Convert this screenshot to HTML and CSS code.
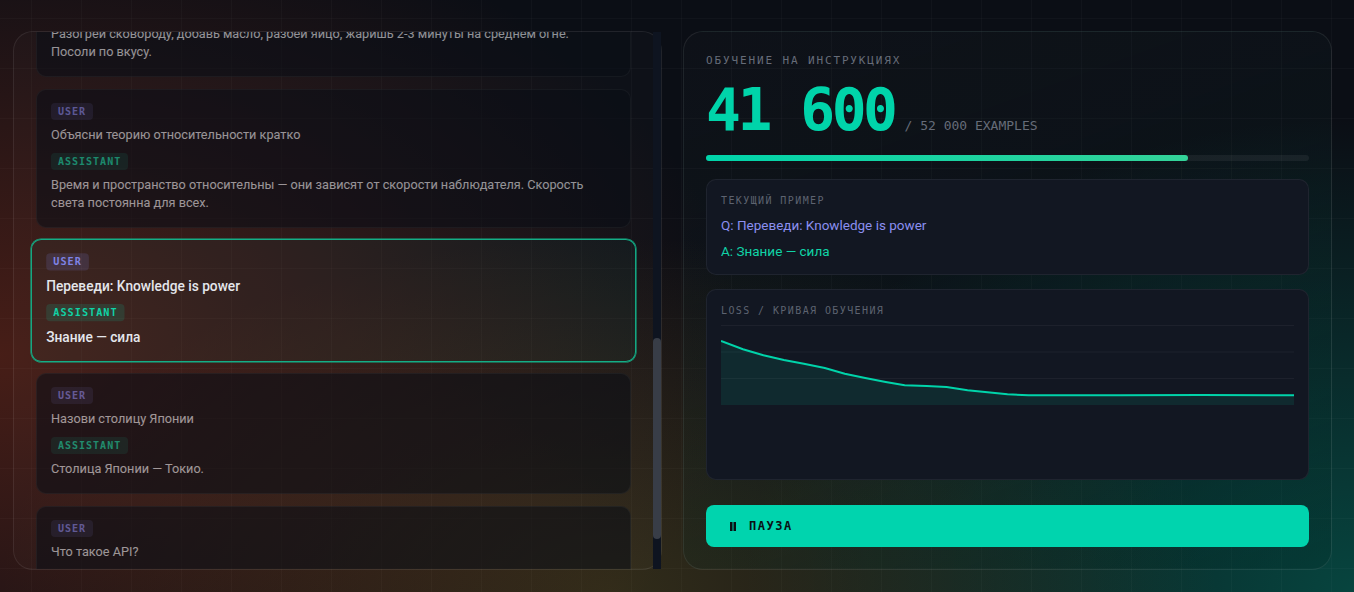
FILE: index.html
```html
<!DOCTYPE html>
<html lang="ru">
<head>
  <meta charset="UTF-8" />
  <meta name="viewport" content="width=device-width, initial-scale=1.0" />
  <title>Instruction Tuning</title>
  <link rel="stylesheet" href="styles.css">
</head>
<body>
  <div class="app">
    <!-- dataset examples -->
    <div class="panel list-panel">
      <div class="dialogs" id="dialogs">
        <div class="card">
          <span class="role user">USER</span>
          <p class="msg">Привет! Как дела?</p>
          <span class="role assistant">ASSISTANT</span>
          <p class="msg">Привет! У меня всё хорошо, спасибо. Чем могу помочь?</p>
        </div>
        <div class="card">
          <span class="role user">USER</span>
          <p class="msg">Сколько будет 15 × 4?</p>
          <span class="role assistant">ASSISTANT</span>
          <p class="msg">15 × 4 = 60.</p>
        </div>
        <div class="card">
          <span class="role user">USER</span>
          <p class="msg">Что такое фотосинтез?</p>
          <span class="role assistant">ASSISTANT</span>
          <p class="msg">Фотосинтез — процесс, при котором растения превращают свет, воду и углекислый газ в глюкозу и кислород для своего роста.</p>
        </div>
        <div class="card">
          <span class="role user">USER</span>
          <p class="msg">Напиши короткое поздравление с днём рождения</p>
          <span class="role assistant">ASSISTANT</span>
          <p class="msg">С днём рождения! Пусть этот год принесёт много радости, здоровья, тёплых встреч и исполнения самых заветных желаний.</p>
        </div>
        <div class="card">
          <span class="role user">USER</span>
          <p class="msg">Переведи: Good morning</p>
          <span class="role assistant">ASSISTANT</span>
          <p class="msg">Доброе утро</p>
        </div>
        <div class="card">
          <span class="role user">USER</span>
          <p class="msg">Как пожарить яичницу?</p>
          <span class="role assistant">ASSISTANT</span>
          <p class="msg">Разогрей сковороду, добавь масло, разбей яйцо, жаришь 2-3 минуты на среднем огне. Посоли по вкусу.</p>
        </div>
        <div class="card">
          <span class="role user">USER</span>
          <p class="msg">Объясни теорию относительности кратко</p>
          <span class="role assistant">ASSISTANT</span>
          <p class="msg">Время и пространство относительны — они зависят от скорости наблюдателя. Скорость света постоянна для всех.</p>
        </div>
        <div class="card active">
          <span class="role user">USER</span>
          <p class="msg">Переведи: Knowledge is power</p>
          <span class="role assistant">ASSISTANT</span>
          <p class="msg">Знание — сила</p>
        </div>
        <div class="card">
          <span class="role user">USER</span>
          <p class="msg">Назови столицу Японии</p>
          <span class="role assistant">ASSISTANT</span>
          <p class="msg">Столица Японии — Токио.</p>
        </div>
        <div class="card">
          <span class="role user">USER</span>
          <p class="msg">Что такое API?</p>
          <span class="role assistant">ASSISTANT</span>
          <p class="msg">API — интерфейс, через который программы обмениваются данными.</p>
        </div>
      </div>
      <div class="scrollbar"><div class="thumb" id="thumb"></div></div>
    </div>

    <!-- training stats -->
    <div class="panel stats">
      <div class="eyebrow">Обучение на инструкциях</div>
      <div class="counter">
        <span class="count">41 600</span>
        <span class="total">/ 52 000 EXAMPLES</span>
      </div>
      <div class="progress"><div class="progress-fill" style="width: 80%;"></div></div>

      <div class="box current">
        <div class="box-label">Текущий пример</div>
        <p class="q">Q: Переведи: Knowledge is power</p>
        <p class="a">A: Знание — сила</p>
      </div>

      <div class="box loss">
        <div class="box-label">Loss / кривая обучения</div>
        <svg class="chart" viewBox="0 0 574 140" preserveAspectRatio="none">
          <line x1="0" y1="0.5" x2="574" y2="0.5" class="grid" />
          <line x1="0" y1="27" x2="574" y2="27" class="grid" />
          <line x1="0" y1="53.5" x2="574" y2="53.5" class="grid" />
          <path class="area" d="M0 16 L22 24.3 L42.5 30.3 L63 35 L83 38.7 L104 43 L124 48.7 L144.5 53 L165 57 L184 60.3 L206 61 L226 62 L247 65.3 L267 67.3 L287 69.3 L308 70.3 L400 70.3 L480 70 L574 70.3 L574 80 L0 80 Z" />
          <path class="line" d="M0 16 L22 24.3 L42.5 30.3 L63 35 L83 38.7 L104 43 L124 48.7 L144.5 53 L165 57 L184 60.3 L206 61 L226 62 L247 65.3 L267 67.3 L287 69.3 L308 70.3 L400 70.3 L480 70 L574 70.3" />
        </svg>
      </div>

      <button class="pause-btn">
        <svg width="6" height="9" viewBox="0 0 6 9"><rect x="0" y="0" width="2.5" height="9" /><rect x="3.5" y="0" width="2.5" height="9" /></svg>
        ПАУЗА
      </button>
    </div>
  </div>

  <script>
    // keep the current example in the middle of the list
    const list = document.getElementById("dialogs");
    const thumb = document.getElementById("thumb");
    document.querySelector(".card.active").scrollIntoView({ block: "center" });

    function updateThumb() {
      const h = list.clientHeight;
      thumb.style.height = (h * h / list.scrollHeight) + "px";
      thumb.style.top = (list.scrollTop / list.scrollHeight * h) + "px";
    }
    list.addEventListener("scroll", updateThumb);
    updateThumb();
  </script>
</body>
</html>
```

FILE: styles.css
```css
* {
  box-sizing: border-box;
}

html, body {
  height: 100%;
}

body {
  margin: 0;
  font-family: Roboto, "Liberation Sans", sans-serif;
  font-size: 13px;
  color: #e4e6eb;
  background-color: #0b0e15;
  background-image:
    linear-gradient(rgba(255, 255, 255, 0.022) 1px, transparent 1px),
    linear-gradient(90deg, rgba(255, 255, 255, 0.022) 1px, transparent 1px),
    radial-gradient(ellipse 55% 80% at 0% 60%, rgba(130, 45, 25, 0.5), transparent 100%),
    radial-gradient(ellipse 45% 60% at 45% 100%, rgba(120, 100, 35, 0.35), transparent 100%),
    radial-gradient(ellipse 45% 80% at 100% 100%, rgba(0, 150, 125, 0.4), transparent 100%);
  background-size: 50px 50px, 50px 50px, auto, auto, auto;
  background-position: 31px 18px, 31px 18px, 0 0, 0 0, 0 0;
  overflow: hidden;
}

.app {
  display: grid;
  grid-template-columns: 1fr 1fr;
  gap: 21px;
  height: 100%;
  padding: 31px 22px 22px 13px;
}

.panel {
  border: 1px solid rgba(255, 255, 255, 0.08);
  border-radius: 20px;
  background: rgba(255, 255, 255, 0.015);
  padding: 22px;
  min-height: 0;
}

/* left list */

.list-panel {
  position: relative;
  padding: 0;
}

.dialogs {
  display: flex;
  flex-direction: column;
  gap: 12px;
  height: 100%;
  padding: 22px 30px 22px 22px;
  overflow-y: auto;
}

.scrollbar {
  position: absolute;
  top: 0;
  right: 0;
  bottom: 0;
  width: 8px;
  background: #0e1420;
}

.thumb {
  position: absolute;
  left: 0;
  right: 0;
  border-radius: 4px;
  background: #383d47;
}

.card {
  flex-shrink: 0;
  padding: 13px 14px 15px;
  border: 1px solid rgba(255, 255, 255, 0.07);
  border-radius: 10px;
  background: rgba(10, 14, 22, 0.92);
  opacity: 0.6;
}

.card .msg {
  font-size: 12.7px;
}

.card.active {
  opacity: 1;
  background: rgba(0, 212, 170, 0.04);
  border-color: #14ad86;
  box-shadow: 0 0 0 0.5px #14ad86;
  transform: scale(1.017);
}

.card.active .msg {
  font-size: 13.5px;
  font-weight: 500;
}

.role {
  display: block;
  width: fit-content;
  padding: 3px 7px;
  border-radius: 4px;
  font-family: "DejaVu Sans Mono", monospace;
  font-size: 10px;
  line-height: 11px;
  font-weight: bold;
  letter-spacing: 1px;
}

.role.user {
  color: #7f83e6;
  background: rgba(127, 131, 230, 0.16);
}

.role.assistant {
  color: #10d3a6;
  background: rgba(0, 212, 170, 0.14);
}

.msg {
  margin: 6px 0 9px;
  line-height: 18px;
}

.msg:last-child {
  margin-bottom: 0;
}

/* right stats */

.stats {
  display: flex;
  flex-direction: column;
  background: linear-gradient(160deg, rgba(255, 255, 255, 0.015), rgba(0, 40, 36, 0.25));
}

.eyebrow {
  font-family: "DejaVu Sans Mono", monospace;
  font-size: 11px;
  line-height: 13px;
  letter-spacing: 0.17em;
  text-transform: uppercase;
  color: #666c78;
}

.counter {
  display: flex;
  align-items: baseline;
  gap: 10px;
  margin-top: 14px;
}

.count {
  font-family: "DejaVu Sans Mono", monospace;
  font-size: 58px;
  line-height: 58px;
  letter-spacing: -3.5px;
  font-weight: 600;
  color: #00d4aa;
}

.total {
  font-family: "DejaVu Sans Mono", monospace;
  font-size: 13px;
  color: #666c78;
}

.progress {
  height: 6px;
  margin-top: 16px;
  border-radius: 3px;
  background: rgba(255, 255, 255, 0.06);
}

.progress-fill {
  height: 100%;
  border-radius: 3px;
  background: linear-gradient(90deg, #00d4aa, #34d399);
}

.box {
  padding: 14px;
  border: 1px solid rgba(255, 255, 255, 0.06);
  border-radius: 10px;
  background: #121722;
}

.current {
  margin-top: 18px;
}

.loss {
  margin-top: 14px;
}

.box-label {
  font-family: "DejaVu Sans Mono", monospace;
  font-size: 10px;
  line-height: 13px;
  letter-spacing: 1.4px;
  text-transform: uppercase;
  color: #5d6370;
}

.q,
.a {
  margin: 0;
  font-size: 13.5px;
  line-height: 18px;
}

.q {
  margin-top: 9px;
  color: #8b8ff0;
}

.a {
  margin-top: 8px;
  color: #10d3a6;
}

.chart {
  display: block;
  width: 100%;
  height: 140px;
  margin-top: 8px;
}

.chart .grid {
  stroke: rgba(255, 255, 255, 0.05);
  stroke-width: 1;
}

.chart .area {
  fill: rgba(0, 212, 170, 0.1);
}

.chart .line {
  fill: none;
  stroke: #00d4aa;
  stroke-width: 2;
}

.pause-btn {
  display: flex;
  align-items: center;
  gap: 13px;
  margin-top: auto;
  height: 42px;
  padding: 0 24px;
  border: none;
  border-radius: 8px;
  background: #00d4ae;
  color: #0a1014;
  font-family: "DejaVu Sans Mono", monospace;
  font-size: 12px;
  font-weight: bold;
  letter-spacing: 1.5px;
  cursor: pointer;
}

.pause-btn svg {
  fill: #0a1014;
}
```
